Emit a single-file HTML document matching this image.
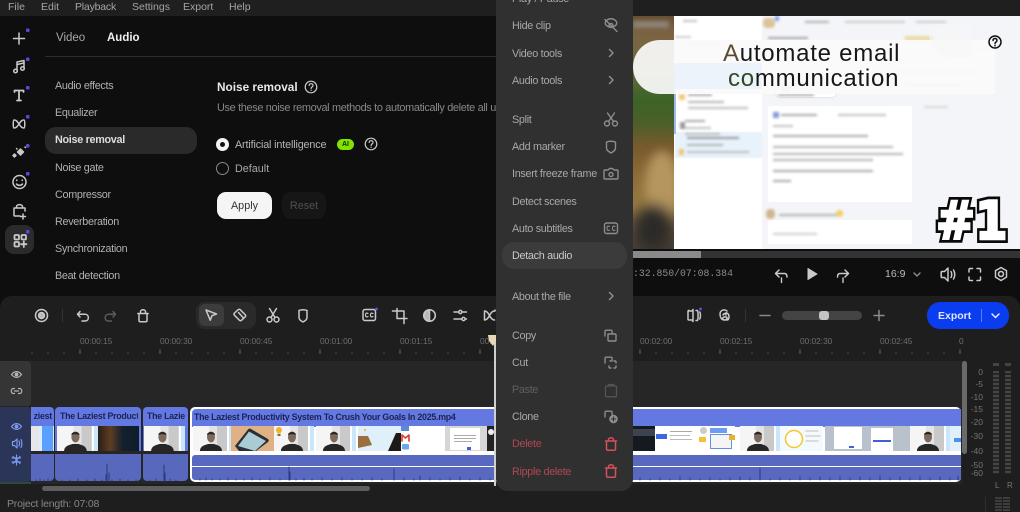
<!DOCTYPE html>
<html><head><meta charset="utf-8"><style>
*{box-sizing:border-box}
html,body{margin:0;padding:0;background:#0e0e0e}
#r{position:relative;width:1020px;height:512px;overflow:hidden;background:#0e0e0e;font-family:"Liberation Sans","Noto Sans CJK JP",sans-serif;font-size:11px;color:#aaa}
.a{position:absolute}
.t{position:absolute;white-space:nowrap;line-height:14px;height:14px}
.m{color:#a8a8a8;font-size:10.8px;left:512px;letter-spacing:-.3px;margin-top:1px}
.l{color:#b0b0b0;font-size:10.8px;left:55px;letter-spacing:-.3px;margin-top:1px}
.rl{color:#6f6f6f;font-size:8.3px;top:334px}
svg{position:absolute;overflow:visible;fill:none;stroke-linecap:round;stroke-linejoin:round}
.i{stroke:#c9c9c9;stroke-width:1.5}
.g{stroke:#8d8d8d;stroke-width:1.4}
.clip{position:absolute;background:#6378e0;border-radius:4px 4px 0 0}
.ct{position:absolute;top:406px;height:20px;font-weight:bold;font-size:8.8px;line-height:21px;color:#1b2354;white-space:nowrap;overflow:hidden;letter-spacing:-.24px}
.th{position:absolute;top:426px;height:25px;overflow:hidden;background:#fff;filter:blur(.35px)}
.au{position:absolute;background:#5768bd}
.lv{position:absolute;font-size:8.5px;color:#747474;line-height:10px;text-align:right;width:20px;left:963px}
.bl{position:absolute;background:#9a9a9a;height:2px}
.n1{position:absolute;left:936px;top:192px;height:60px;line-height:60px;font-size:53px;font-weight:bold;white-space:nowrap;transform:scaleX(.88);transform-origin:0 50%;font-family:'DejaVu Sans',sans-serif;color:#fff}
</style></head><body><div id="r">

<!-- top bar -->
<div class="a" style="left:0;top:0;width:1020px;height:16px;background:#1f1f1f"></div>
<span class="t" style="left:8px;top:0;font-size:10.5px;color:#a5a5a5">File</span>
<span class="t" style="left:41px;top:0;font-size:10.5px;color:#a5a5a5">Edit</span>
<span class="t" style="left:75px;top:0;font-size:10.5px;color:#a5a5a5;letter-spacing:-.2px">Playback</span>
<span class="t" style="left:132px;top:0;font-size:10.5px;color:#a5a5a5">Settings</span>
<span class="t" style="left:183px;top:0;font-size:10.5px;color:#a5a5a5">Export</span>
<span class="t" style="left:229px;top:0;font-size:10.5px;color:#a5a5a5">Help</span>

<!-- left icon rail -->
<div class="a" style="left:5px;top:225px;width:29px;height:29px;background:#2b2b2b;border-radius:9px"></div>
<svg width="34" height="260" style="left:0;top:0">
<g class="i" stroke-width="1.6">
<path d="M19 33v11M13.500 38.500h11"/>
<path d="M17 70V62l7-1.500V68"/><circle cx="15.500" cy="71" r="1.800"/><circle cx="22.500" cy="68.500" r="1.800"/><path d="M17 64.500l7-1.500"/>
<path d="M14.500 92v-1.500h9V92M19 90.500V100M17 100.500h4" stroke-width="1.800"/>
<path d="M14 120c2 0 3 1 5 4 2 3 3 4 5 4 1 0 1-8 0-8-2 0-3 1-5 4-2 3-3 4-5 4-1 0-1-8 0-8z"/>
<path d="M20.500 149l3 3-3 3-3-3zM14.500 154l1.500 1.500-1.500 1.500-1.500-1.500z" fill="#c9c9c9"/><path d="M25 147l.5 .5M16.500 148.500l.5 .5"/>
<circle cx="19.500" cy="182" r="6.500"/><path d="M16.800 180v.5M22.200 180v.5M16.500 184c1.500 1.800 4.500 1.800 6 0"/>
<path d="M14 208h11v3M14 208v7c0 .6.500 1 1 1h5M16.500 208v-1.500c0-2.500 6-2.500 6 0V208M23 214v5M20.500 216.500h5"/>
<rect x="14.500" y="235" width="4.500" height="4.500" rx="1" stroke-width="1.800"/><rect x="21.500" y="235" width="4.500" height="4.500" rx="1" stroke-width="1.800"/><rect x="14.500" y="242" width="4.500" height="4.500" rx="1" stroke-width="1.800"/><path d="M23.800 241.500v5.500M21 244.200h5.500" stroke-width="1.800"/>
</g>
<g fill="#6046d6"><rect x="26" y="28.500" width="3.500" height="3.500" rx="1"/><rect x="26" y="57.500" width="3.500" height="3.500" rx="1"/><rect x="26" y="86" width="3.500" height="3.500" rx="1"/><rect x="26" y="115" width="3.500" height="3.500" rx="1"/><rect x="26" y="144" width="3.500" height="3.500" rx="1"/><rect x="26" y="172" width="3.500" height="3.500" rx="1"/><rect x="26" y="230" width="3.500" height="3.500" rx="1"/></g>
</svg>

<!-- tabs -->
<span class="t" style="left:56px;top:31px;font-size:11.5px;color:#a8a8a8">Video</span>
<span class="t" style="left:107px;top:31px;font-size:11.5px;font-weight:bold;color:#eee">Audio</span>
<div class="a" style="left:45px;top:56px;width:451px;height:1px;background:#2c2c2c"></div>

<!-- left list -->
<div class="a" style="left:45px;top:127px;width:152px;height:27px;background:#2a2a2a;border-radius:11px"></div>
<span class="t l" style="top:78px">Audio effects</span>
<span class="t l" style="top:105px">Equalizer</span>
<span class="t l" style="top:132px;font-weight:bold;color:#ddd">Noise removal</span>
<span class="t l" style="top:160px">Noise gate</span>
<span class="t l" style="top:187px">Compressor</span>
<span class="t l" style="top:214px">Reverberation</span>
<span class="t l" style="top:241px">Synchronization</span>
<span class="t l" style="top:268px">Beat detection</span>

<!-- noise removal panel -->
<span class="t" style="left:217px;top:80px;font-size:11.8px;font-weight:bold;color:#e8e8e8">Noise removal</span>
<svg width="14" height="14" style="left:304px;top:80px" class="i"><circle cx="7" cy="7" r="5.800" stroke-width="1.200"/><path d="M5.200 5.500c0-2.400 3.800-2.400 3.800 0 0 1.400-1.900 1.400-1.900 3" stroke-width="1.200"/><path d="M7.100 10.300v.1" stroke-width="1.300"/></svg>
<div class="a" style="left:217px;top:101px;width:279px;height:14px;overflow:hidden"><span class="t" style="left:0;top:0;font-size:10.9px;color:#888;letter-spacing:-.33px">Use these noise removal methods to automatically delete all unwanted</span></div>
<div class="a" style="left:216px;top:138px;width:13px;height:13px;border-radius:50%;background:#f4f4f4"></div>
<div class="a" style="left:220px;top:142px;width:5px;height:5px;border-radius:50%;background:#111"></div>
<span class="t" style="left:235px;top:138px;font-size:10.8px;color:#b5b5b5;letter-spacing:-.15px">Artificial intelligence</span>
<div class="a" style="left:337px;top:139px;width:17px;height:11px;border-radius:6px;background:#7fe400;color:#1a2a00;font-size:7px;font-weight:bold;text-align:center;line-height:11px">AI</div>
<svg width="14" height="14" style="left:364px;top:137px" class="i"><circle cx="7" cy="7" r="5.800" stroke-width="1.200"/><path d="M5.200 5.500c0-2.400 3.800-2.400 3.800 0 0 1.400-1.900 1.400-1.900 3" stroke-width="1.200"/><path d="M7.100 10.300v.1" stroke-width="1.300"/></svg>
<div class="a" style="left:216px;top:162px;width:13px;height:13px;border-radius:50%;border:1.300px solid #888"></div>
<span class="t" style="left:235px;top:162px;font-size:10.8px;color:#a8a8a8">Default</span>
<div class="a" style="left:217px;top:192px;width:55px;height:27px;background:#f5f5f5;border-radius:9px;color:#333;font-size:10.8px;text-align:center;line-height:28px">Apply</div>
<div class="a" style="left:282px;top:192px;width:44px;height:27px;background:#161616;border-radius:9px;color:#505050;font-size:10.8px;text-align:center;line-height:28px">Reset</div>

<!-- preview -->
<div class="a" style="left:633px;top:16px;width:387px;height:233px;overflow:hidden;background:#fff">
 <div class="a" style="left:-8px;top:-8px;width:58px;height:250px;filter:blur(3px);background:linear-gradient(180deg,#5a452d 0,#7d6342 10%,#6c6b3f 24%,#3c6327 36%,#4b5f2a 46%,#7a5a2e 56%,#8e6c38 68%,#9a7b44 80%,#55483a 92%,#3c3833 100%)"></div>
 <div class="a" style="left:12px;top:135px;width:34px;height:70px;border-radius:50%;background:#b5965f;filter:blur(5px)"></div>
 <div class="a" style="left:0;top:5px;width:36px;height:7px;background:#8f8478;filter:blur(2px)"></div>
 <div class="a" style="left:0;top:190px;width:40px;height:45px;background:#2c2a28;filter:blur(7px);border-radius:50%"></div>
 <div class="a" style="left:41px;top:0;width:88px;height:233px;background:#fff"></div>
 <div class="a" style="left:129px;top:0;width:258px;height:233px;background:#f3f5f8"></div>
 <div class="a" style="left:42px;top:116px;width:87px;height:26px;background:#e8f2fb;filter:blur(.5px)"></div>
 <div class="a" style="left:41px;top:58px;width:2px;height:60px;background:#9cbcec"></div>
 <div class="a" style="left:135px;top:90px;width:144px;height:96px;background:#fff"></div>
 <div class="a" style="left:135px;top:204px;width:144px;height:24px;background:#fff"></div>
 <div class="a" style="left:143px;top:64px;width:60px;height:17px;background:#fff;border-radius:4px;box-shadow:0 0 2px #ccc"></div>
 <div style="position:absolute;inset:0;filter:blur(1.2px);opacity:.75">
 <div class="bl" style="left:50px;top:4px;width:14px;background:#aaa"></div><div class="bl" style="left:42px;top:20px;width:16px;background:#bbb"></div>
 <div class="bl" style="left:50px;top:27px;width:36px;background:#bbb"></div><div class="bl" style="left:52px;top:34px;width:14px;background:#ccc"></div>
 <div class="bl" style="left:55px;top:78px;width:24px;background:#888"></div><div class="bl" style="left:55px;top:85px;width:36px;background:#999"></div><div class="bl" style="left:55px;top:91px;width:60px;background:#a5a5a5"></div>
 <div class="bl" style="left:52px;top:104px;width:20px;background:#888"></div><div class="bl" style="left:52px;top:111px;width:26px;background:#aaa"></div><div class="bl" style="left:52px;top:117px;width:35px;background:#aaa"></div>
 <div class="bl" style="left:54px;top:121px;width:52px;background:#777"></div><div class="bl" style="left:54px;top:128px;width:36px;background:#999"></div><div class="bl" style="left:54px;top:135px;width:62px;background:#aaa"></div>
 <div class="a" style="left:46px;top:78px;width:6px;height:6px;background:#eeb84a"></div><div class="a" style="left:47px;top:106px;width:5px;height:7px;background:#777"></div><div class="a" style="left:46px;top:133px;width:5px;height:6px;background:#eeb84a"></div>
 <div class="a" style="left:130px;top:2px;width:12px;height:10px;border-radius:4px;background:#d8b17b"></div>
 <div class="a" style="left:142px;top:0;width:4px;height:5px;background:#5b8df0"></div>
 <div class="bl" style="left:172px;top:5px;width:24px;background:#999"></div><div class="bl" style="left:212px;top:5px;width:60px;background:#bbb"></div><div class="bl" style="left:283px;top:5px;width:30px;background:#bbb"></div>
 <div class="bl" style="left:135px;top:21px;width:40px;background:#888"></div>
 <div class="a" style="left:272px;top:20px;width:28px;height:5px;background:#e8d490"></div>
 <div class="bl" style="left:145px;top:78px;width:36px;background:#888"></div>
 <div class="a" style="left:149px;top:70px;width:7px;height:5px;background:#d9483b"></div><div class="bl" style="left:158px;top:68px;width:20px;background:#999"></div>
 <div class="a" style="left:140px;top:96px;width:6px;height:6px;background:#5f7dd0"></div><div class="bl" style="left:148px;top:98px;width:36px;background:#888"></div><div class="bl" style="left:205px;top:98px;width:48px;background:#aaa"></div>
 <div class="bl" style="left:140px;top:109px;width:20px;background:#aaa"></div><div class="bl" style="left:140px;top:119px;width:95px;background:#8d8d8d"></div><div class="bl" style="left:140px;top:130px;width:120px;background:#999"></div><div class="bl" style="left:140px;top:137px;width:130px;background:#999"></div><div class="bl" style="left:140px;top:143px;width:100px;background:#999"></div><div class="bl" style="left:140px;top:154px;width:100px;background:#888"></div><div class="bl" style="left:140px;top:164px;width:18px;background:#888"></div>
 <div class="a" style="left:133px;top:193px;width:9px;height:10px;border-radius:4px;background:#c8a170"></div><div class="bl" style="left:146px;top:198px;width:58px;background:#999"></div><div class="a" style="left:203px;top:194px;width:7px;height:7px;border-radius:50%;background:#f1c232"></div>
 <div class="bl" style="left:140px;top:217px;width:44px;background:#bbb"></div>
 <div class="bl" style="left:300px;top:32px;width:60px;background:#d2d2d2"></div>
 <div class="bl" style="left:262px;top:55px;width:80px;background:#d0d0d0"></div><div class="bl" style="left:270px;top:68px;width:60px;background:#d0d0d0"></div>
 <div class="bl" style="left:291px;top:90px;width:24px;background:#ccc"></div>
 </div>
 <div class="a" style="left:0;top:24px;width:362px;height:54px;background:rgba(250,250,250,.93);border-radius:27px 0 0 27px"></div>
 <div class="a" style="left:41px;top:47px;width:88px;height:26px;background:rgba(226,238,250,.6)"></div>
 <div class="a" style="left:296px;top:8px;width:42px;height:34px;border-radius:0 0 0 24px;background:rgba(246,246,246,.6)"></div>
</div>
<span class="t" style="left:723px;top:40px;height:28px;line-height:28px;font-size:24px;color:#171717;letter-spacing:.75px"><span style="color:#5c4a30">A</span>utomate email</span>
<span class="t" style="left:728px;top:65px;height:28px;line-height:28px;font-size:24px;color:#171717;letter-spacing:.75px"><span style="color:#2d4a25">co</span>mmunication</span>
<svg width="16" height="16" style="left:987px;top:34px" fill="none" stroke="#111"><circle cx="8" cy="8" r="6" stroke-width="1.500"/><path d="M6 6.500c0-2.700 4-2.700 4 0 0 1.500-2 1.500-2 3.100" stroke-width="1.500"/><path d="M8 11.600v.1" stroke-width="1.600"/></svg>
<span class="n1" style="-webkit-text-stroke:8px #0a0a0a">#1</span>
<span class="n1" style="-webkit-text-stroke:2.5px #fff" aria-hidden="true">#1</span>

<!-- progress -->
<div class="a" style="left:633px;top:249px;width:387px;height:2px;background:#0e0e0e"></div>
<div class="a" style="left:633px;top:251px;width:387px;height:7px;background:#333"></div>
<div class="a" style="left:633px;top:251px;width:68px;height:7px;background:#8a8a8a"></div>

<!-- player controls -->
<span class="t" style="left:633px;top:267px;font-family:'Liberation Mono',monospace;font-size:9.8px;color:#8a8a8a">:32.850/07:08.384</span>
<svg width="240" height="24" style="left:770px;top:262px">
<path class="i" d="M9 8l-3.500 3.500L9 15M6 11.500h8.500c2 0 2.500 1.500 2.500 3.500" stroke-width="1.500"/><path d="M11.500 16v4.500" stroke="#c9c9c9" stroke-width="1.400"/>
<path d="M38 6.500v11l9-5.500z" fill="#c9c9c9" stroke="#c9c9c9" stroke-width="1"/>
<path class="i" d="M75 8l3.500 3.500L75 15M78.500 11.500H70c-2 0-2.500 1.500-2.500 3.500" stroke-width="1.500"/><path d="M73 16v4.500" stroke="#c9c9c9" stroke-width="1.400"/>
<path class="g" d="M144 11l3 3 3-3" stroke-width="1.100"/>
<path class="i" d="M172 9.500h2.500l3.500-3.500v13l-3.500-3.500H172c-.5 0-.8-.3-.8-.8V10.300c0-.5.300-.8.800-.8zM181 9.500c1 1.500 1 4.500 0 6M183.500 8c1.700 2.500 1.700 6.500 0 9" stroke-width="1.400"/>
<path class="i" d="M199 10V7.500c0-.5.500-1 1-1h2.500M207 6.500h2.500c.5 0 1 .5 1 1V10M210.500 15v2.500c0 .5-.5 1-1 1H207M202.500 18.500H200c-.5 0-1-.5-1-1V15" stroke-width="1.500"/>
<path class="i" d="M231 5.500l5.500 3.200v6.400L231 18.500l-5.500-3.400V8.700z M231 9.500a2.500 2.500 0 1 0 .01 0" stroke-width="1.400"/>
</svg>
<span class="t" style="left:885px;top:267px;font-size:10.5px;color:#bcbcbc">16:9</span>

<!-- timeline panel -->
<div class="a" style="left:0;top:296px;width:1020px;height:216px;background:#1e1e1e;border-radius:12px 12px 0 0"></div>
<div class="a" style="left:0;top:361px;width:962px;height:123px;background:#262626"></div>
<div class="a" style="left:0;top:361px;width:31px;height:45px;background:#353535;border-radius:0 4px 4px 0"></div>
<div class="a" style="left:0;top:407px;width:31px;height:75px;background:#2b3557;border-radius:0 4px 4px 0"></div>
<div class="a" style="left:0;top:482px;width:31px;height:2px;background:#2e4a3c"></div>

<!-- toolbar -->
<div class="a" style="left:196px;top:302px;width:60px;height:27px;background:#2a2a2a;border-radius:9px"></div>
<div class="a" style="left:199px;top:304px;width:25px;height:22px;background:#3c3c3c;border-radius:6px"></div>
<div class="a" style="left:62px;top:309px;width:1px;height:13px;background:#333"></div>
<div class="a" style="left:745px;top:309px;width:1px;height:13px;background:#333"></div>
<svg width="1020" height="40" style="left:0;top:296px">
<g class="i" stroke="#b8b8b8">
<circle cx="41.500" cy="19.500" r="6"/><circle cx="41.500" cy="19.500" r="3" fill="#b8b8b8"/>
<path d="M80 15.500l-2.500 2.800 2.500 2.700M78 18.300h7c4.500 0 4.500 6.700 0 6.700h-3"/>
<path d="M137.800 17.500h10.400M139 17.500v7c0 .8.500 1.300 1.300 1.300h5.400c.8 0 1.300-.5 1.300-1.300v-7M140.500 17.500v-2c0-2.300 5-2.300 5 0v2" stroke-width="1.500"/>
<path d="M206 14l10.500 4-4.500 1.700-1.800 4.500z"/>
<path d="M234.500 17l3.500-3.200c.8-.7 1.600-.7 2.300 0l4.800 4.800c.7.7.7 1.600 0 2.300l-3.500 3.300c-.7.700-1.500.700-2.200 0l-4.900-4.900c-.7-.7-.7-1.500 0-2.300zM238.500 16.500l4.500 5"/>
<circle cx="269.500" cy="23.500" r="2.500"/><circle cx="276.500" cy="23.500" r="2.500"/><path d="M271 21.500l5.500-9M275 21.500l-5.500-9"/>
<path d="M299 14.500c2.500-1 5.500-1 8 0v7c0 2-2 3.500-4 4.500-2-1-4-2.500-4-4.500z"/>
<rect x="363" y="13.500" width="12.500" height="11" rx="2"/><path d="M368 17.500c-2-1-2.500 0-2.500 1.500s.5 2.500 2.500 1.500M373 17.500c-2-1-2.500 0-2.500 1.500s.5 2.500 2.500 1.500" stroke-width="1.200"/>
<path d="M394 15h10v10M397 12.500V22.500h10M404 25v2.500M394 15h-1.500"/>
<circle cx="429.500" cy="19.500" r="5.800"/><path d="M429.500 14v11a5.500 5.500 0 0 1 0-11z" fill="#b8b8b8"/>
<path d="M454 16h4M462.500 16h4M454 23h8M465.500 23h1"/><circle cx="460.300" cy="16" r="1.600"/><circle cx="463.500" cy="23" r="1.600"/>
<path d="M484.500 15c2 0 3.500 1.500 5 4.500s3 4.500 5 4.500M484.500 24c2 0 3.500-1.500 5-4.500s3-4.500 5-4.500M484.500 15v9M495 15v-1"/>
<path d="M689 15h3l1-1.500v12l-1-1.500h-3c-.6 0-1-.4-1-1v-7.600c0-.6.400-1 1-1zM696 14.500h1.500c.8 2 .8 8 0 10H696M699.800 16c.8 2 .8 5 0 7"/>
<path d="M727 15c-3-2.500-7-.5-7 3s1.500 6 4.500 6 3.500-2.500 1.500-3-4 .5-3 2.500M724.500 18c2-2.500 4.500 0 4.500 2.500s-1 3.500-2 3.500M723 19c1-2 3-1.500 3 0"/>
</g>
<path d="M113 21l2.500-2.700-2.500-2.800M115.500 18.300h-7c-4.500 0-4.500 6.700 0 6.700h3" stroke="#5b5b5b" stroke-width="1.500"/>
<path d="M760 19.500h10" stroke="#8a8a8a" stroke-width="1.500"/>
<path d="M874 19.500h10M879 14.500v10" stroke="#8a8a8a" stroke-width="1.500"/>
<circle cx="376.500" cy="13" r="1.500" fill="#6046d6"/><circle cx="700.500" cy="13" r="1.500" fill="#6046d6"/>
</svg>
<div class="a" style="left:782px;top:311px;width:80px;height:9px;border-radius:5px;background:#444"></div>
<div class="a" style="left:819px;top:311px;width:10px;height:9px;border-radius:3px;background:#c4c4c4"></div>
<div class="a" style="left:927px;top:302px;width:82px;height:27px;background:#0a3df0;border-radius:13px"></div>
<span class="t" style="left:938px;top:309px;font-size:10.5px;font-weight:bold;color:#dfe6ff">Export</span>
<div class="a" style="left:981px;top:309px;width:1px;height:13px;background:#5a7df5"></div>
<svg width="12" height="8" style="left:990px;top:312px"><path d="M2 2l3.500 3.500L9 2" stroke="#e6ebff" stroke-width="1.500"/></svg>

<!-- ruler -->
<span class="t rl" style="left:80px">00:00:15</span><span class="t rl" style="left:160px">00:00:30</span><span class="t rl" style="left:240px">00:00:45</span><span class="t rl" style="left:320px">00:01:00</span><span class="t rl" style="left:400px">00:01:15</span><span class="t rl" style="left:480px">00:01:30</span><span class="t rl" style="left:640px">00:02:00</span><span class="t rl" style="left:720px">00:02:15</span><span class="t rl" style="left:800px">00:02:30</span><span class="t rl" style="left:880px">00:02:45</span><span class="t rl" style="left:959px">0</span>
<svg width="962" height="12" style="left:0;top:346px">
<path d="M80 3.500v4.500M160 3.500v4.500M240 3.500v4.500M320 3.500v4.500M400 3.500v4.500M480 3.500v4.500M640 3.500v4.500M720 3.500v4.500M800 3.500v4.500M880 3.500v4.500M960 3.500v4.500" stroke="#6a6a6a" stroke-width="1" stroke-linecap="butt"/>
<path d="M32 6.500v1.500M48 6.500v1.500M64 6.500v1.500M96 6.500v1.500M112 6.500v1.500M128 6.500v1.500M144 6.500v1.500M176 6.500v1.500M192 6.500v1.500M208 6.500v1.500M224 6.500v1.500M256 6.500v1.500M272 6.500v1.500M288 6.500v1.500M304 6.500v1.500M336 6.500v1.500M352 6.500v1.500M368 6.500v1.500M384 6.500v1.500M416 6.500v1.500M432 6.500v1.500M448 6.500v1.500M464 6.500v1.500M656 6.500v1.500M672 6.500v1.500M688 6.500v1.500M704 6.500v1.500M736 6.500v1.500M752 6.500v1.500M768 6.500v1.500M784 6.500v1.500M816 6.500v1.500M832 6.500v1.500M848 6.500v1.500M864 6.500v1.500M896 6.500v1.500M912 6.500v1.500M928 6.500v1.500M944 6.500v1.500" stroke="#5a5a5a" stroke-width="1" stroke-linecap="butt"/>
</svg>

<!-- track header icons -->
<svg width="31" height="130" style="left:0;top:361px">
<g stroke="#b5b5b5" stroke-width="1.200"><path d="M11.500 13.500c3-3.800 7-3.800 10 0-3 3.800-7 3.800-10 0z"/><circle cx="16.500" cy="13.500" r="1.300" fill="#b5b5b5"/><path d="M14.500 27.500h-1.200c-2.700 0-2.700 5 0 5h1.200M18.500 27.500h1.200c2.700 0 2.700 5 0 5h-1.200M14.500 30h4"/></g>
<g stroke="#7d9bf0" stroke-width="1.200"><path d="M11.500 65.500c3-3.800 7-3.800 10 0-3 3.800-7 3.800-10 0z"/><circle cx="16.500" cy="65.500" r="1.300" fill="#7d9bf0"/><path d="M12.500 80.500h2l2.500-2.500v9l-2.500-2.500h-2zM19 80c.8 1.200.8 3.600 0 5M21 78.500c1.200 2 1.200 6 0 8"/><path d="M12 97h9M12 101h9M16.500 94v10M13 95.500l7 7M20 95.500l-7 7" stroke-dasharray="2 1.200"/></g>
</svg>

<!-- clip 1 -->
<div class="clip" style="left:31px;top:407px;width:23px;height:19px;border-radius:0 4px 0 0"></div>
<span class="ct" style="left:31px;width:21px"><span style="position:absolute;right:0;white-space:nowrap">ziest</span></span>
<div class="th" style="left:31px;width:23px;background:#e6e6e6"><div class="a" style="left:8px;top:0;width:3px;height:25px;background:#ddeeff"></div><div class="a" style="left:11px;top:0;width:11px;height:25px;background:#5aa0ff"></div></div>
<div class="au" style="left:31px;top:454px;width:23px;height:27px;border-radius:0 0 4px 0"></div>
<!-- clip 2 -->
<div class="clip" style="left:55px;top:407px;width:86px;height:20px"></div>
<div class="ct" style="left:60px;width:78px">The Laziest Product</div>
<div class="th" style="left:55px;width:86px;height:25px;background:#6378e0"><div class="a" style="left:2px;top:0;width:41px;height:25px"><svg width="41" height="25" viewBox="0 0 40 25" style="left:0;top:0" preserveAspectRatio="none"><use href="#pr"/></svg></div><div class="a" style="left:43px;top:0;width:41px;height:25px;background:linear-gradient(90deg,#2a1d18,#5e3d22 30%,#13202d 60%,#0f1c2c)"></div></div>
<div class="au" style="left:55px;top:454px;width:86px;height:27px;border-radius:0 0 4px 4px"></div>
<!-- clip 3 -->
<div class="clip" style="left:143px;top:407px;width:45px;height:20px"></div>
<div class="ct" style="left:147px;width:40px">The Lazie</div>
<div class="th" style="left:143px;width:45px;background:#6378e0"><svg width="41" height="25" viewBox="0 0 40 25" style="left:1px;top:0" preserveAspectRatio="none"><use href="#pr"/></svg></div>
<div class="au" style="left:143px;top:454px;width:45px;height:27px;border-radius:0 0 4px 4px"></div>

<!-- main clip -->
<div class="a" style="left:190px;top:407px;width:771px;height:75px;background:#fff;border-radius:5px"></div>
<div class="clip" style="left:191.500px;top:408.500px;width:769.500px;height:18px;border-radius:4px 0 0 0"></div>
<div class="ct" style="left:194px;width:300px;top:407px">The Laziest Productivity System To Crush Your Goals In 2025.mp4</div>
<!-- thumbs -->
<div class="th" style="left:193px;width:39px"><svg width="40" height="25" style="left:0;top:0"><use href="#pr"/></svg></div>
<div class="th" style="left:231px;width:43px;background:#dfb184"><svg width="43" height="25" style="left:0;top:0"><path d="M4 20L17 3.500c1-1 2-1 3-.5l17 10c1 1 1 2 0 3L25 25H8z" fill="#2a2d33"/><path d="M7 20L18 5.500 35 15 24 25z" fill="#a8cbd4"/></svg></div>
<div class="th" style="left:274px;width:40px"><svg width="40" height="25" style="left:0;top:0"><use href="#pr"/><path d="M2 4a3 3 0 0 1 6 0c0 1.500-1.200 2-1.500 3.500h-3C3.200 6 2 5.500 2 4z" fill="#f2b22b" stroke="none"/><rect x="3.500" y="8" width="3" height="2" fill="#7a6a3a" stroke="none"/></svg></div>
<div class="th" style="left:316px;width:42px"><svg width="42" height="25" style="left:0;top:0"><use href="#pr"/></svg></div>
<div class="th" style="left:358px;width:43px;background:#dff0fa"><svg width="43" height="25" style="left:0;top:0"><path d="M0 10l10 0 4 9-14 3z" fill="#9a6e3e"/><path d="M30 25l8-18h5v18z" fill="#1d1917"/><circle cx="7" cy="4" r="1" fill="#f5b800"/></svg></div>
<div class="th" style="left:401px;width:45px;background:#fff"><svg width="45" height="25" style="left:0;top:0"><rect x="0" y="0" width="8" height="5" fill="#5b8ad8"/><path d="M1 9v6M8 9v6M1 9l3.500 3L8 9" stroke="#d8483b" stroke-width="1.700"/><rect x="1" y="18" width="7" height="5.500" rx="1" fill="#69a9ee"/></svg></div>
<div class="th" style="left:445px;width:42px;background:#d6d6d6"><div class="a" style="left:5px;top:2px;width:30px;height:22px;background:#fff"></div><div class="a" style="left:9px;top:9px;width:22px;height:1px;background:#aaa"></div><div class="a" style="left:9px;top:12px;width:22px;height:1px;background:#aaa"></div><div class="a" style="left:9px;top:15px;width:18px;height:1px;background:#aaa"></div><div class="a" style="left:22px;top:21px;width:4px;height:3px;background:#3b62d8"></div></div>
<div class="th" style="left:487px;width:9px;background:#222"><div class="a" style="left:1px;top:3px;width:6px;height:6px;border-radius:50%;background:#eee"></div></div>
<div class="th" style="left:633px;width:22px;background:#151a20"><div class="a" style="left:0;top:3px;width:22px;height:7px;background:#3b4450"></div></div>
<div class="th" style="left:655px;width:40px;background:#fff"><div class="a" style="left:1px;top:8px;width:11px;height:5px;background:#3f66e0"></div><div class="a" style="left:15px;top:5px;width:22px;height:1px;background:#aaa"></div><div class="a" style="left:15px;top:9px;width:20px;height:1px;background:#bbb"></div><div class="a" style="left:15px;top:13px;width:22px;height:1px;background:#bbb"></div></div>
<div class="th" style="left:695px;width:40px;background:#fff"><div class="a" style="left:5px;top:1px;width:7px;height:7px;border-radius:50%;background:#ccc"></div><div class="a" style="left:15px;top:2px;width:17px;height:5px;background:#6d9cf0"></div><div class="a" style="left:15px;top:8px;width:22px;height:15px;border:1px solid #6a8fe8;background:#f5f5f5"></div><div class="a" style="left:4px;top:11px;width:7px;height:5px;background:#f3c23b"></div><div class="a" style="left:34px;top:9px;width:6px;height:5px;background:#e8b52a"></div></div>
<div class="th" style="left:740px;width:40px"><svg width="40" height="25" style="left:0;top:0"><use href="#pr"/></svg></div>
<div class="th" style="left:780px;width:43px;background:#f4f9fd"><svg width="43" height="25" style="left:0;top:0"><circle cx="14" cy="13" r="8.500" stroke="#f2c830" stroke-width="1.500" fill="#fff"/><path d="M26 5h12M26 10h14M26 15h12" stroke="#c9c9c9" stroke-width="1.200"/></svg></div>
<div class="th" style="left:825px;width:45px;background:#b9c2cc"><div class="a" style="left:9px;top:1px;width:28px;height:22px;background:#fff"></div><div class="a" style="left:24px;top:20px;width:5px;height:2px;background:#3b62d8"></div></div>
<div class="th" style="left:870px;width:45px;background:#b9c2cc"><div class="a" style="left:1px;top:2px;width:22px;height:23px;background:#fff"></div><div class="a" style="left:3px;top:14px;width:18px;height:2px;background:#3b62d8"></div></div>
<div class="th" style="left:910px;width:40px"><svg width="40" height="25" style="left:0;top:0"><use href="#pr"/></svg></div>
<div class="th" style="left:950px;width:11px;background:#dff0fb"><div class="a" style="left:4px;top:12px;width:7px;height:4px;background:#4f8ff0"></div></div>
<div class="au" style="left:192px;top:455px;width:769px;height:11px;border-radius:3px 0 0 0;background:#5869bf"></div>
<div class="au" style="left:192px;top:467px;width:769px;height:13px;border-radius:0 0 0 3px;background:#5869bf"></div>
<svg width="1020" height="30" style="left:0;top:454px" stroke="#2b3a80" stroke-width="1">
<path d="M36 27v-1M40 27v-2M44 27v-1M48 27v-2M52 27v-1M62 27v-1M70 27v-1M78 27v-2M87 27v-1M95 27v-2M102 27v-1M107 27V10M106 27v-6M109 27v-8M112 27v-1M120 27v-2M128 27v-1M136 27v-1M150 27v-1M156 27v-2M164 27V11M165 27v-8M170 27v-2M176 27v-1"/>
<path d="M200 26v-1M206 26v-2M212 26v-1M220 26v-1M228 26v-2M236 26v-1M244 26v-1M252 26v-2M260 26v-1M270 26v-2M280 26v-1M289 26V13M290 26v-8M296 26v-1M304 26v-2M312 26v-1M322 26v-2M332 26v-1M342 26v-2M352 26v-1M362 26v-1M372 26v-2M382 26v-1M394 26V15M404 26v-2M414 26v-1M420 26v-4M430 26v-2M440 26v-1M450 26v-2M460 26v-3M470 26v-1M480 26v-2M490 26v-1"/>
<path d="M640 26v-2M650 26v-1M660 26v-2M670 26v-1M680 26v-3M690 26v-2M700 26v-1M710 26v-2M720 26v-1M730 26v-2M740 26v-3M750 26v-2M760 26V14M770 26v-1M780 26v-2M790 26v-1M800 26v-3M810 26v-2M820 26v-3M830 26v-2M840 26v-3M850 26v-2M860 26v-3M870 26v-2M880 26v-4M890 26v-2M900 26v-3M910 26v-2M920 26v-3M930 26v-2M940 26v-3M950 26v-2M958 26v-4"/>
</svg>

<!-- scrollbars -->
<div class="a" style="left:962px;top:361px;width:5px;height:93px;background:#6a6a6a;border-radius:3px"></div>
<div class="a" style="left:42px;top:486px;width:328px;height:5px;background:#5e5e5e;border-radius:3px"></div>
<span class="t" style="left:7px;top:497px;font-size:10.5px;color:#868686;letter-spacing:-.2px">Project length: 07:08</span>

<!-- meter -->
<span class="lv" style="top:367px">0</span><span class="lv" style="top:379px">-5</span><span class="lv" style="top:392px">-10</span><span class="lv" style="top:404px">-15</span><span class="lv" style="top:417px">-20</span><span class="lv" style="top:431px">-30</span><span class="lv" style="top:446px">-40</span><span class="lv" style="top:460px">-50</span><span class="lv" style="top:468px">-60</span>
<div class="a" style="left:993px;top:363px;width:6px;height:3px;background:#444"></div><div class="a" style="left:1005px;top:363px;width:6px;height:3px;background:#444"></div>
<div class="a" style="left:993px;top:371px;width:6px;height:103px;background:repeating-linear-gradient(180deg,#454545 0 2px,#262626 2px 4px)"></div>
<div class="a" style="left:1005px;top:371px;width:6px;height:103px;background:repeating-linear-gradient(180deg,#454545 0 2px,#262626 2px 4px)"></div>
<span class="t" style="left:995px;top:479px;font-size:8px;color:#777">L</span><span class="t" style="left:1007px;top:479px;font-size:8px;color:#777">R</span>
<div class="a" style="left:985px;top:497px;width:1px;height:15px;background:#2e2e2e"></div>
<div class="a" style="left:995px;top:497px;width:15px;height:15px;background:repeating-linear-gradient(180deg,#3d3d3d 0 2px,#1e1e1e 2px 3px)"></div>
<div class="a" style="left:1002px;top:497px;width:1px;height:15px;background:#1e1e1e"></div>

<!-- playhead -->
<div class="a" style="left:494px;top:336px;width:2px;height:150px;background:#cfcfcf"></div>
<svg width="10" height="12" style="left:488px;top:335px"><path d="M0 0h8v6l-3 5L1 6z" fill="#e8d8b8" stroke="none"/></svg>

<!-- context menu -->
<div class="a" style="left:496px;top:0;width:137px;height:491px;background:#303030;border-radius:0 0 12px 12px"></div>
<div class="a" style="left:502px;top:242px;width:125px;height:27px;background:#3b3b3b;border-radius:12px"></div>
<span class="t m" style="top:-9px">Play / Pause</span>
<span class="t m" style="top:18px">Hide clip</span>
<span class="t m" style="top:46px">Video tools</span>
<span class="t m" style="top:73px">Audio tools</span>
<span class="t m" style="top:112px">Split</span>
<span class="t m" style="top:139px">Add marker</span>
<span class="t m" style="top:166px">Insert freeze frame</span>
<span class="t m" style="top:194px">Detect scenes</span>
<span class="t m" style="top:221px">Auto subtitles</span>
<span class="t m" style="top:248px;color:#c8c8c8">Detach audio</span>
<span class="t m" style="top:289px">About the file</span>
<span class="t m" style="top:328px">Copy</span>
<span class="t m" style="top:355px">Cut</span>
<span class="t m" style="top:382px;color:#5f5f5f">Paste</span>
<span class="t m" style="top:409px">Clone</span>
<span class="t m" style="top:436px;color:#b14753">Delete</span>
<span class="t m" style="top:464px;color:#b14753">Ripple delete</span>
<svg width="30" height="491" style="left:597px;top:0">
<g class="g">
<path d="M9 21c3-3 7-3 10 0 1 1 1 3 0 4-3 3-7 3-10 0-1-1-1-3 0-4zM8 19.500l12 12"/><circle cx="14" cy="25.500" r="2"/>
<path d="M12.500 49.500l3.500 3.500-3.500 3.500M12.500 76.500l3.500 3.500-3.500 3.500M12.500 292.500l3.500 3.500-3.500 3.500" stroke-width="1.500"/>
<circle cx="10" cy="123.500" r="2.500"/><circle cx="18" cy="123.500" r="2.500"/><path d="M11.500 121.500l6-8.500M16.500 121.500l-6-8.500"/>
<path d="M9.500 142c3-1 6-1 9 0v6c0 2.500-2.500 3.800-4.500 5-2-1.200-4.500-2.500-4.500-5z"/>
<path d="M8 170h3l1.500-1.500h3l1.500 1.500h3c.7 0 1 .5 1 1v7c0 .6-.4 1-1 1H8c-.6 0-1-.4-1-1v-7c0-.5.300-1 1-1z"/><circle cx="14" cy="174.500" r="2"/>
<rect x="7.500" y="223" width="13" height="10.500" rx="2"/><path d="M12.500 226.500c-2-1-2.500 0-2.500 1.800s.5 2.700 2.500 1.800M18 226.500c-2-1-2.500 0-2.500 1.800s.5 2.700 2.500 1.800" stroke-width="1.100"/>
<path d="M8 336v-4.500c0-.8.500-1.300 1.300-1.300h4.500c.8 0 1.300.5 1.300 1.300V334M11 334h7c.6 0 1 .4 1 1v5c0 .6-.4 1-1 1h-6c-.6 0-1-.4-1-1z"/>
<path d="M8 363v-4.500c0-.8.500-1.300 1.300-1.300h4.500c.8 0 1.300.5 1.300 1.300V361M13 361h1M17 361h1c.6 0 1 .4 1 1v1M19 366v1c0 .6-.4 1-1 1h-1M14 368h-1c-.6 0-1-.4-1-1v-1"/>
<path d="M8 417v-4.500c0-.8.500-1.300 1.300-1.300h4.500c.8 0 1.300.5 1.300 1.300V415"/><circle cx="16.500" cy="419" r="4.300" fill="#8d8d8d" stroke="none"/><path d="M16.500 417v4M14.500 419h4" stroke="#303030" stroke-width="1.100"/>
</g>
<path d="M9.500 386h9c.6 0 1 .4 1 1v8.500c0 .8-.6 1.300-1.300 1.300H9.800c-.8 0-1.300-.5-1.300-1.300V387c0-.6.400-1 1-1zM11.500 386v-1.500h5V386" stroke="#555" stroke-width="1.300"/>
<g stroke="#d4505c" stroke-width="1.500">
<path d="M8.500 441h11M9.500 441v8c0 .8.500 1.300 1.300 1.300h6.400c.8 0 1.300-.5 1.300-1.300v-8M11.500 441v-1.500c0-2.300 5-2.300 5 0v1.500"/>
<path d="M8.500 468h11M9.500 468v8c0 .8.500 1.300 1.300 1.300h6.400c.8 0 1.300-.5 1.300-1.300v-8M11.500 468v-1.500c0-2.300 5-2.300 5 0v1.500"/>
</g>
</svg>

<svg width="0" height="0" style="left:0;top:0"><defs><g id="pr"><rect width="40" height="25" fill="#e4e4e4"/><rect x="0" width="16" height="25" fill="#f5f5f5"/><rect x="24" width="10" height="25" fill="#c9c9c9"/><rect x="34" width="2" height="25" fill="#fff"/><rect x="36" width="4" height="25" fill="#c9e6fb"/><path d="M7 25c0-5 5-6 8-7h6c3 1 8 2 8 7z" fill="#262626" stroke="none"/><ellipse cx="18" cy="11" rx="4" ry="5.500" fill="#7d6a5c" stroke="none"/><path d="M14 9c0-4 8-4 8 0-2-1-6-1-8 0z" fill="#2a2522" stroke="none"/></g></defs></svg>
</div></body></html>
